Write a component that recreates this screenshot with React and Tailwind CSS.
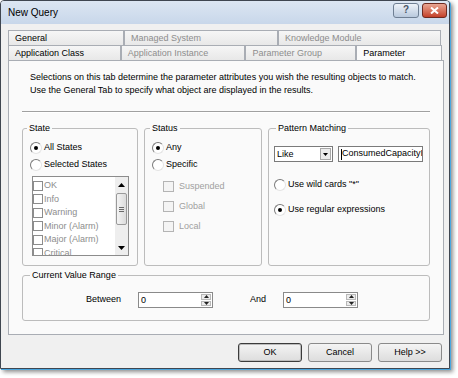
import React from 'react'

const STATES = ['OK', 'Info', 'Warning', 'Minor (Alarm)', 'Major (Alarm)', 'Critical']

function Radio({ checked }) {
  return (
    <span className="w-[12px] h-[12px] shrink-0 rounded-full border border-t-[#7a7a7a] border-l-[#7a7a7a] border-r-[#e4e4e4] border-b-[#e4e4e4] bg-white flex items-center justify-center">
      {checked && <span className="w-[4px] h-[4px] rounded-full bg-black" />}
    </span>
  )
}

function Arrow({ up }) {
  return (
    <svg width="7" height="4" viewBox="0 0 7 4">
      <polygon points={up ? '3.5,0 7,4 0,4' : '0,0 7,0 3.5,4'} fill="#000" />
    </svg>
  )
}

function GroupBox({ label, className, legendClass, children }) {
  return (
    <fieldset className={`border border-[#bcbcbc] rounded-[3px] ${className}`}>
      <legend className={`px-[2px] leading-[11px] ${legendClass}`}>{label}</legend>
      {children}
    </fieldset>
  )
}

function Spin() {
  return (
    <div className="w-[75px] h-[16px] border border-[#8a8a8a] bg-white flex">
      <span className="flex-1 pl-[2px] leading-[14px]">0</span>
      <div className="w-[10px] my-[1px] mr-[1px] flex flex-col gap-[1px]">
        <span className="flex-1 bg-[#ececec] border border-[#b8b8b8] flex items-center justify-center">
          <svg width="5" height="3" viewBox="0 0 5 3"><polygon points="2.5,0 5,3 0,3" fill="#222" /></svg>
        </span>
        <span className="flex-1 bg-[#ececec] border border-[#b8b8b8] flex items-center justify-center">
          <svg width="5" height="3" viewBox="0 0 5 3"><polygon points="0,0 5,0 2.5,3" fill="#222" /></svg>
        </span>
      </div>
    </div>
  )
}

function Tab({ label, w, muted, active }) {
  return (
    <div
      className={`h-full border-t border-l border-r border-[#a9adb4] pl-[6px] leading-[14px] whitespace-nowrap ${
        active ? 'bg-[#fafafa] -mb-[1px] relative' : 'bg-gradient-to-b from-[#f6f6f6] to-[#e8e8e8]'
      } ${muted ? 'text-[#8d8d8d]' : 'text-black'}`}
      style={{ width: w }}
    >
      {label}
    </div>
  )
}

export default function App() {
  return (
    <div className="w-[458px] h-[378px] bg-white text-[9px] text-black font-['Liberation_Sans',Arial,sans-serif]">
      <div className="w-[450px] h-[369px] border border-[#3f4650] rounded-t-[4px] bg-[#f0f0f0] flex flex-col shadow-[1px_1px_0_#4aa6de,3px_3px_4px_rgba(0,0,0,0.45)]">
        {/* Title bar */}
        <div className="h-[23px] shrink-0 rounded-t-[3px] bg-gradient-to-b from-[#dce6f2] to-[#c8d7ea] flex items-center justify-between pl-[7px] pr-[2px]">
          <span className="text-[10px] text-black">New Query</span>
          <div className="flex gap-[3px] -mt-[5px]">
            <div className="w-[26px] h-[15px] rounded-[3px] border border-[#6f7f93] bg-gradient-to-b from-[#eef3f9] to-[#b9c9dd] flex items-center justify-center text-[10px] font-bold text-[#4a5566] leading-none">?</div>
            <div className="w-[25px] h-[15px] rounded-[3px] border border-[#6e2a20] bg-gradient-to-b from-[#e8a593] to-[#c33f28] flex items-center justify-center">
              <svg width="9" height="7" viewBox="0 0 9 7">
                <path d="M1 0.5 L8 6.5 M8 0.5 L1 6.5" stroke="#fff" strokeWidth="2" />
              </svg>
            </div>
          </div>
        </div>

        {/* Body */}
        <div className="flex-1 flex flex-col pt-[6px] px-[7px]">
          {/* Tabs */}
          <div className="h-[15px] flex">
            <Tab label="General" w={116} />
            <Tab label="Managed System" w={154} muted />
            <Tab label="Knowledge Module" w={163} muted />
          </div>
          <div className="h-[15px] flex">
            <Tab label="Application Class" w={113} />
            <Tab label="Application Instance" w={125} muted />
            <Tab label="Parameter Group" w={111} muted />
            <Tab label="Parameter" w={86} active />
          </div>

          {/* Panel */}
          <div className="w-[436px] h-[275px] border border-[#a9adb4] bg-[#fafafa] flex flex-col">
            <div className="mt-[10px] ml-[21px] leading-[13px] whitespace-nowrap">
              <p>Selections on this tab determine the parameter attributes you wish the resulting objects to match.</p>
              <p>Use the General Tab to specify what object are displayed in the results.</p>
            </div>
            <div className="mt-[14px] ml-[13px] w-[408px] h-[2px] border-t border-[#a0a0a0] border-b border-b-white" />

            <div className="mt-[10px] ml-[13px] flex gap-[6px]">
              {/* State */}
              <GroupBox label="State" className="w-[116px] h-[143px]" legendClass="ml-[4px]">
                <div className="mt-[7px] ml-[7px] h-[13px] flex items-center gap-[2px]">
                  <Radio checked />
                  <span>All States</span>
                </div>
                <div className="mt-[4px] ml-[7px] h-[13px] flex items-center gap-[2px]">
                  <Radio />
                  <span>Selected States</span>
                </div>
                <div className="mt-[5px] ml-[9px] w-[97px] h-[80px] border border-[#8c8c8c] bg-white flex overflow-hidden">
                  <div className="flex-1 pt-[2px] overflow-hidden">
                    {STATES.map(s => (
                      <div key={s} className="h-[13.5px] flex items-center gap-[1px] text-[#8d8d8d] whitespace-nowrap">
                        <span className="w-[10px] h-[10px] border border-[#8c8c8c] bg-white shrink-0" />
                        {s}
                      </div>
                    ))}
                  </div>
                  <div className="w-[13px] bg-[#eeeeee] flex flex-col items-stretch">
                    <div className="h-[15px] flex items-center justify-center"><Arrow up /></div>
                    <div className="mt-[1px] mx-[1px] h-[32px] rounded-[2px] border border-[#9a9a9a] bg-gradient-to-r from-[#f4f4f4] to-[#dcdcdc] flex flex-col items-center justify-center gap-[1px]">
                      <span className="w-[5px] h-[1px] bg-[#6a6a6a]" />
                      <span className="w-[5px] h-[1px] bg-[#6a6a6a]" />
                      <span className="w-[5px] h-[1px] bg-[#6a6a6a]" />
                    </div>
                    <div className="flex-1" />
                    <div className="h-[15px] flex items-center justify-center"><Arrow /></div>
                  </div>
                </div>
              </GroupBox>

              {/* Status */}
              <GroupBox label="Status" className="w-[118px] h-[143px]" legendClass="ml-[5px]">
                <div className="mt-[7px] ml-[7px] h-[13px] flex items-center gap-[2px]">
                  <Radio checked />
                  <span>Any</span>
                </div>
                <div className="mt-[4px] ml-[7px] h-[13px] flex items-center gap-[2px]">
                  <Radio />
                  <span>Specific</span>
                </div>
                <div className="mt-[9px] ml-[18px] flex flex-col gap-[7px] text-[#a0a0a0]">
                  {['Suspended', 'Global', 'Local'].map(s => (
                    <div key={s} className="h-[13px] flex items-center gap-[5px]">
                      <span className="w-[11px] h-[11px] border border-[#b4b4b4] bg-[#f4f4f4] shrink-0" />
                      {s}
                    </div>
                  ))}
                </div>
              </GroupBox>

              {/* Pattern Matching */}
              <GroupBox label="Pattern Matching" className="w-[162px] h-[143px]" legendClass="ml-[7px]">
                <div className="mt-[12px] ml-[5px] flex gap-[5px]">
                  <div className="w-[59px] h-[16px] border border-[#7a7a7a] bg-white flex">
                    <span className="flex-1 pl-[2px] leading-[14px]">Like</span>
                    <span className="w-[11px] my-[1px] mr-[1px] border border-[#a8a8a8] bg-[#ececec] flex items-center justify-center">
                      <svg width="5" height="3" viewBox="0 0 5 3"><polygon points="0,0 5,0 2.5,3" fill="#000" /></svg>
                    </span>
                  </div>
                  <div className="w-[85px] h-[16px] border border-[#7a7a7a] bg-white flex items-center overflow-hidden whitespace-nowrap pl-[2px]">
                    <span className="w-[1px] h-[11px] bg-black shrink-0" />
                    <span>ConsumedCapacityInPercent</span>
                  </div>
                </div>
                <div className="mt-[16px] ml-[5px] h-[13px] flex items-center gap-[2px]">
                  <Radio />
                  <span>Use wild cards "*"</span>
                </div>
                <div className="mt-[12px] ml-[5px] h-[13px] flex items-center gap-[2px]">
                  <Radio checked />
                  <span>Use regular expressions</span>
                </div>
              </GroupBox>
            </div>

            {/* Current Value Range */}
            <div className="mt-[4px] ml-[13px]">
              <GroupBox label="Current Value Range" className="w-[408px] h-[51px]" legendClass="ml-[7px]">
                <div className="mt-[11px] flex items-center">
                  <span className="ml-[63px] w-[52px]">Between</span>
                  <Spin />
                  <span className="ml-[37px] w-[33px]">And</span>
                  <Spin />
                </div>
              </GroupBox>
            </div>
          </div>

          {/* Buttons */}
          <div className="mt-[8px] flex justify-end gap-[6px]">
            <button className="w-[64px] h-[19px] rounded-[3px] border border-[#3c3c3c] shadow-[inset_0_0_0_1px_#bcbcbc] bg-gradient-to-b from-[#f4f4f4] to-[#dddddd] text-[9px]">OK</button>
            <button className="w-[64px] h-[19px] rounded-[3px] border border-[#8a8a8a] bg-gradient-to-b from-[#f4f4f4] to-[#dddddd] text-[9px]">Cancel</button>
            <button className="w-[64px] h-[19px] rounded-[3px] border border-[#8a8a8a] bg-gradient-to-b from-[#f4f4f4] to-[#dddddd] text-[9px]">Help &gt;&gt;</button>
          </div>
        </div>
      </div>
    </div>
  )
}
